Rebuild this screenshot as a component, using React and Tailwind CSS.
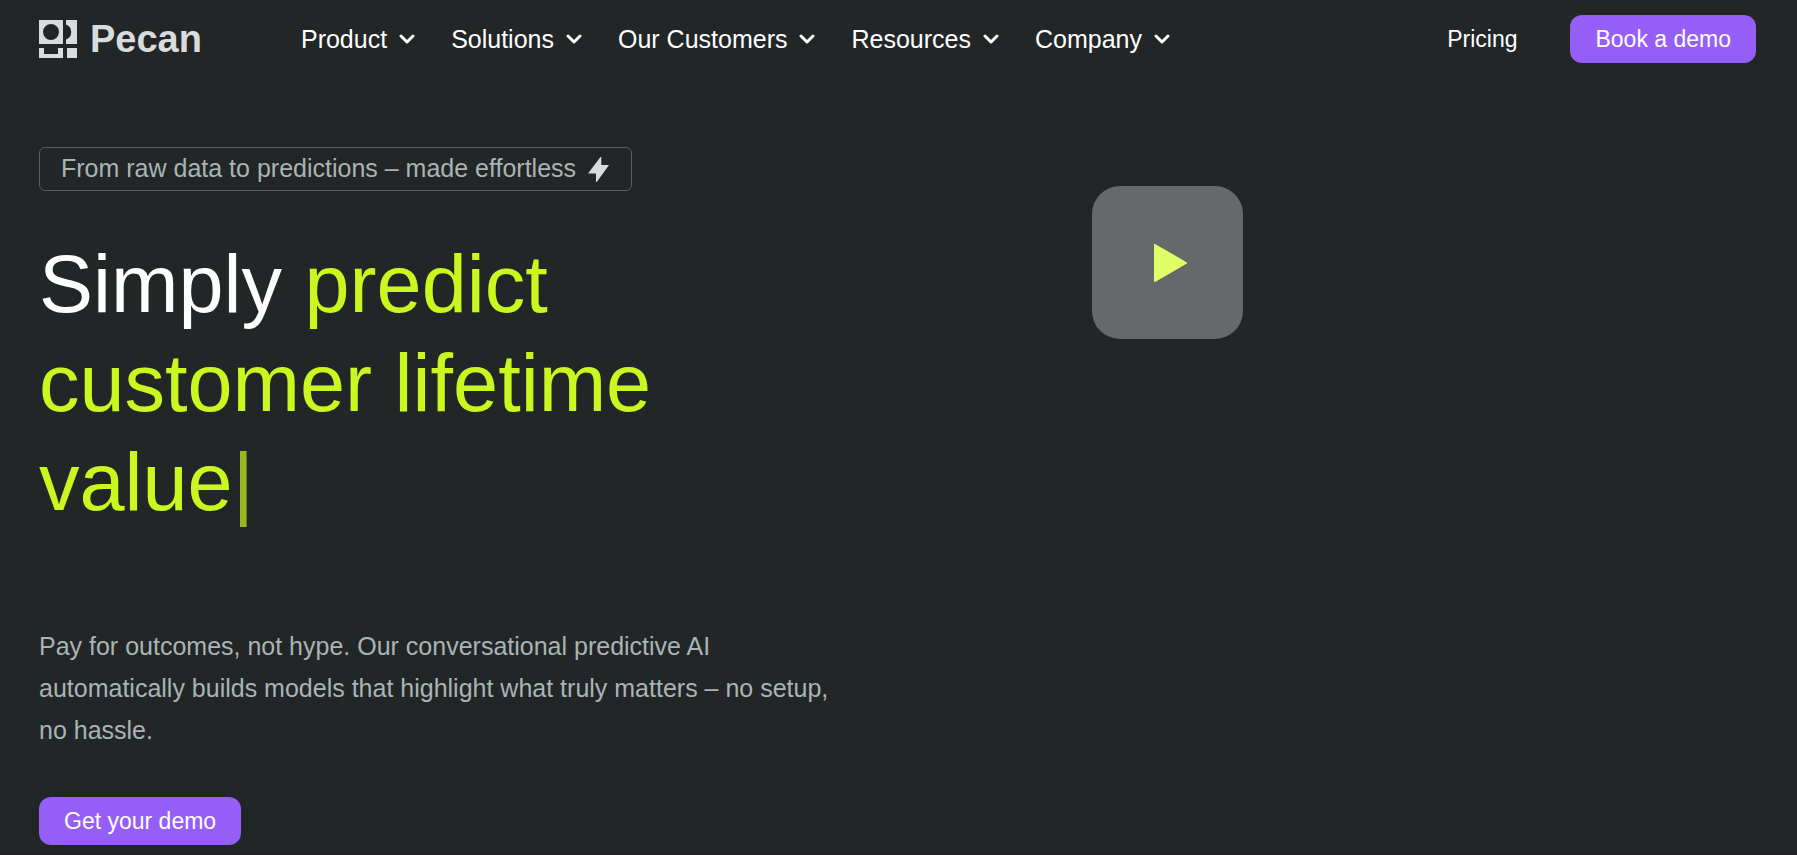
const NAV_ITEMS = ['Product', 'Solutions', 'Our Customers', 'Resources', 'Company'];

function Logo() {
  return (
    <a href="#" className="flex items-center gap-3 text-[#d8dcdc]">
      <svg width="39" height="39" viewBox="0 0 39 39" fill="currentColor" aria-hidden="true">
        <path fillRule="evenodd" d="M0 0h24v24H0zM12 4a8 8 0 1 0 0 16a8 8 0 1 0 0-16z" />
        <path d="M27 0h11v24H27v-4.500a8 8 0 0 0 0-15z" />
        <path d="M0 28h5v6h14v-6h5v10H0z" />
        <path d="M28 28h10v10H28z" />
      </svg>
      <span className="text-[38px] leading-10 font-bold">Pecan</span>
    </a>
  );
}

function NavItem({ label }) {
  return (
    <button type="button" className="flex items-center gap-3 text-[25px] leading-8">
      {label}
      <svg width="16" height="10" viewBox="0 0 16 10" fill="none" stroke="currentColor"
        strokeWidth="3" strokeLinecap="round" strokeLinejoin="round" aria-hidden="true">
        <path d="M2 2l6 6 6-6" />
      </svg>
    </button>
  );
}

function Header() {
  return (
    <header className="flex items-center pt-[15px] pr-[41px] pl-[39px]">
      <Logo />
      <nav className="ml-[99px] flex items-center gap-9">
        {NAV_ITEMS.map((label) => <NavItem key={label} label={label} />)}
      </nav>
      <div className="ml-auto flex items-center gap-[53px]">
        <a href="#" className="text-[23px]">Pricing</a>
        <button type="button" className="h-12 rounded-xl bg-[#955ef7] px-[25px] text-[23px]">
          Book a demo
        </button>
      </div>
    </header>
  );
}

export default function App() {
  return (
    <div className="min-h-screen border-b-2 border-[#251f27] bg-[#222627] font-['Liberation_Sans',sans-serif] text-white">
      <Header />

      <main className="grid grid-cols-2 pt-[84px] pr-[41px] pl-[39px]">
        <section className="flex flex-col items-start">
          <p className="flex h-11 items-center gap-3 rounded-md border border-[#5b5f60] pr-[22px] pl-[21px] text-[25px] text-[#a9b4b4]">
            From raw data to predictions – made effortless
            <svg width="21" height="25" viewBox="0 0 21 25" fill="#d8dcdc" aria-hidden="true">
              <path d="M12.500 0L0 16.500h8V25h.8L21 8h-7.700V0z" />
            </svg>
          </p>

          <h1 className="mt-11 max-w-[680px] text-[81px] leading-[99px]">
            Simply{' '}
            <span className="text-[#c9f71f]">
              predict customer lifetime value<span className="opacity-70">|</span>
            </span>
          </h1>

          <p className="mt-[93px] max-w-[800px] text-[25px] leading-[42px] text-[#a9b4b4]">
            Pay for outcomes, not hype. Our conversational predictive AI automatically
            builds models that highlight what truly matters – no setup, no hassle.
          </p>

          <button type="button" className="mt-[46px] h-12 rounded-xl bg-[#955ef7] px-[25px] text-[23px]">
            Get your demo
          </button>
        </section>

        <section className="pt-[39px] pl-[194px]">
          <button type="button" aria-label="Play video"
            className="flex h-[153px] w-[151px] items-center justify-center rounded-[28px] bg-[#656969] pl-1.5">
            <svg width="33" height="38" viewBox="0 0 33 38" fill="#e0ff66" stroke="#e0ff66"
              strokeWidth="2" strokeLinejoin="round" aria-hidden="true">
              <path d="M1 1v36l31-18z" />
            </svg>
          </button>
        </section>
      </main>
    </div>
  );
}
